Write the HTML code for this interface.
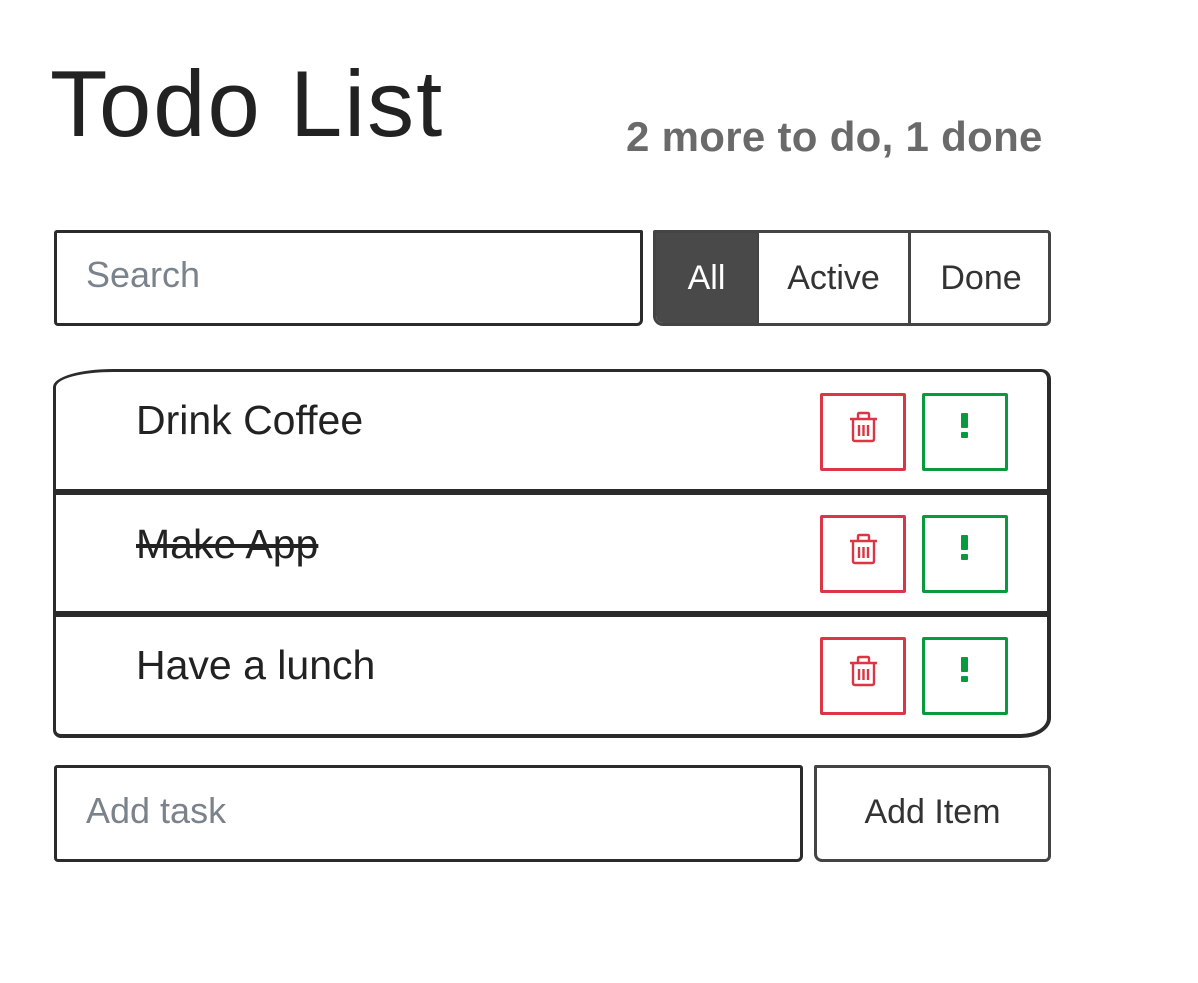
<!DOCTYPE html>
<html><head><meta charset="utf-8"><style>
body{margin:0;background:#fff;font-family:"Liberation Sans",sans-serif;color:#222;}
.abs{position:absolute;box-sizing:border-box;}
.box{border:3px solid #2b2b2b;}
</style></head><body>
<div class="abs" style="left:50px;top:50px;font-size:94px;color:#222;letter-spacing:2px;">Todo List</div>
<div class="abs" style="left:626px;top:113px;font-size:42px;color:#6a6a6a;font-weight:bold;letter-spacing:0.3px;">2 more to do, 1 done</div>

<div class="abs box" style="left:54px;top:230px;width:589px;height:96px;border-radius:3px 2px 6px 4px;"></div>
<div class="abs" style="left:86px;top:254px;font-size:36px;color:#7a838b;">Search</div>

<div class="abs box" style="left:653px;top:230px;width:398px;height:96px;border-color:#444;border-radius:2px 4px 6px 10px;overflow:hidden;">
 <div class="abs" style="left:0;top:0;width:101px;height:100%;background:#494949;color:#fff;font-size:34px;text-align:center;line-height:90px;">All</div>
 <div class="abs" style="left:101px;top:0;width:154px;height:100%;border-left:2px solid #444;border-right:3px solid #444;font-size:34px;text-align:center;line-height:90px;color:#333;">Active</div>
 <div class="abs" style="left:255px;top:0;width:140px;height:100%;font-size:34px;text-align:center;line-height:90px;color:#333;">Done</div>
</div>

<div class="abs box" style="left:53px;top:369px;width:998px;height:369px;border-width:3px 4px 4px 3px;border-radius:60px 10px 30px 8px / 18px 10px 20px 8px;"></div>
<div class="abs" style="left:55px;top:489px;width:994px;height:6px;background:#2b2b2b;"></div>
<div class="abs" style="left:55px;top:611px;width:994px;height:6px;background:#2b2b2b;"></div>

<div class="abs" style="left:136px;top:397px;font-size:41px;color:#222;">Drink Coffee</div>
<div class="abs" style="left:136px;top:521px;font-size:41px;color:#222;text-decoration:line-through;">Make App</div>
<div class="abs" style="left:136px;top:642px;font-size:41px;color:#222;">Have a lunch</div>

<div class="abs" style="left:820px;top:393px;width:86px;height:78px;border:3px solid #dc3545;border-radius:2px;"></div>
<div class="abs" style="left:922px;top:393px;width:86px;height:78px;border:3px solid #0a9a3e;border-radius:2px;"></div>
<div class="abs" style="left:820px;top:515px;width:86px;height:78px;border:3px solid #dc3545;border-radius:2px;"></div>
<div class="abs" style="left:922px;top:515px;width:86px;height:78px;border:3px solid #0a9a3e;border-radius:2px;"></div>
<div class="abs" style="left:820px;top:637px;width:86px;height:78px;border:3px solid #dc3545;border-radius:2px;"></div>
<div class="abs" style="left:922px;top:637px;width:86px;height:78px;border:3px solid #0a9a3e;border-radius:2px;"></div>

<svg class="abs" style="left:0;top:0" width="1198" height="983">
 <g fill="none" stroke="#dc3545" stroke-width="2.4">
  <g id="t"><path d="M850 419h27M858 419v-4.5q0-1.5 1.5-1.5h8q1.5 0 1.5 1.5v4.5M853 419v20q0 2 2 2h17q2 0 2-2v-20M859 425v11M863.5 425v11M868 425v11"/></g>
  <use href="#t" y="122"/><use href="#t" y="244"/>
 </g>
 <g fill="#0a9a3e">
  <rect x="961" y="413" width="7" height="15" rx="1"/><rect x="961" y="432" width="7" height="6" rx="1"/>
  <rect x="961" y="535" width="7" height="15" rx="1"/><rect x="961" y="554" width="7" height="6" rx="1"/>
  <rect x="961" y="657" width="7" height="15" rx="1"/><rect x="961" y="676" width="7" height="6" rx="1"/>
 </g>
</svg>

<div class="abs box" style="left:54px;top:765px;width:749px;height:97px;border-radius:3px 3px 6px 4px;"></div>
<div class="abs" style="left:86px;top:790px;font-size:36px;color:#7a838b;">Add task</div>
<div class="abs box" style="left:814px;top:765px;width:237px;height:97px;border-color:#444;border-radius:2px 4px 6px 8px;font-size:34px;text-align:center;line-height:88px;color:#333;">Add Item</div>
</body></html>
